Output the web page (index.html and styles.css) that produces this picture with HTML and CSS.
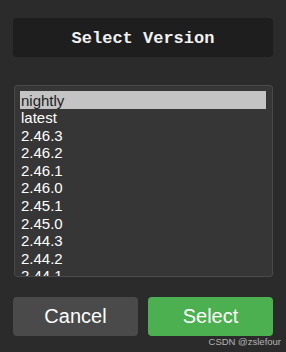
FILE: index.html
```html
<!DOCTYPE html>
<html>
<head>
<meta charset="utf-8">
<link rel="stylesheet" href="styles.css">
</head>
<body>
<div class="dialog">
  <div class="title">Select Version</div>
  <div class="list">
    <div class="item selected">nightly</div>
    <div class="item">latest</div>
    <div class="item">2.46.3</div>
    <div class="item">2.46.2</div>
    <div class="item">2.46.1</div>
    <div class="item">2.46.0</div>
    <div class="item">2.45.1</div>
    <div class="item">2.45.0</div>
    <div class="item">2.44.3</div>
    <div class="item">2.44.2</div>
    <div class="item">2.44.1</div>
    <div class="item">2.44.0</div>
  </div>
  <div class="buttons">
    <button class="btn cancel">Cancel</button>
    <button class="btn select">Select</button>
  </div>
</div>
<div class="watermark">CSDN @zslefour</div>
</body>
</html>
```
FILE: styles.css
```css
html, body {
  margin: 0;
  padding: 0;
  background: #2b2b2b;
  width: 286px;
  height: 352px;
  overflow: hidden;
}
.dialog {
  display: flex;
  flex-direction: column;
  padding: 18px 13px 0 13px;
}
.title {
  height: 39px;
  padding-top: 2px;
  box-sizing: border-box;
  background: #1e1e1e;
  border-radius: 4px;
  display: flex;
  align-items: center;
  justify-content: center;
  color: #f2f2f2;
  font-family: "Liberation Mono", monospace;
  font-weight: bold;
  font-size: 17px;
}
.list {
  margin: 28px 0 0 1px;
  height: 185px;
  background: #363636;
  border: 1px solid #4a4a4a;
  border-radius: 3px;
  padding: 5px 6px 0 5px;
  overflow: hidden;
  font-family: "Liberation Sans", Arial, sans-serif;
  font-size: 15px;
  color: #ffffff;
}
.item {
  height: 17.6px;
  line-height: 17.6px;
  padding-left: 1px;
  white-space: nowrap;
}
.item.selected {
  background: #c4c4c4;
  color: #1e1e1e;
  height: 18px;
  line-height: 19px;
}
.buttons {
  display: flex;
  gap: 10px;
  margin-top: 20px;
}
.btn {
  flex: 1;
  height: 39px;
  border: none;
  border-radius: 4px;
  color: #ffffff;
  font-family: "Liberation Sans", Arial, sans-serif;
  font-size: 20px;
  padding: 0;
}
.cancel {
  background: #4a4a4a;
}
.select {
  background: #4caf50;
}
.watermark {
  position: absolute;
  right: 5px;
  top: 336px;
  font-family: "Liberation Sans", Arial, sans-serif;
  font-size: 9.5px;
  color: #b4b4b4;
}
```
